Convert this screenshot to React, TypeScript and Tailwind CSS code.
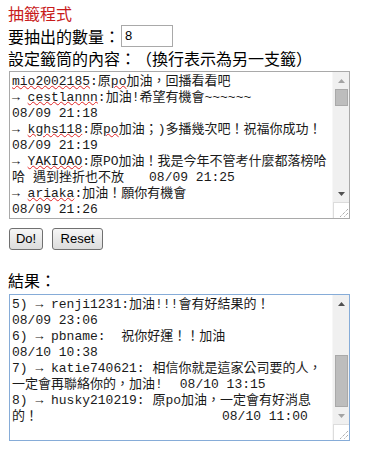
import React from "react";

const sans = "font-['Noto_Sans_CJK_TC','Noto_Sans',sans-serif]";

const U = ({ children }: { children: React.ReactNode }) => (
    <span className="underline decoration-wavy decoration-[#e02424] decoration-1 underline-offset-0">{children}</span>
);

const Arrow = ({ dark, down }: { dark: boolean; down?: boolean }) => (
    <div className="h-[17px] flex items-center justify-center">
        <svg width="7" height="4" viewBox="0 0 7 4">
            <path d={down ? "M0 0 L7 0 L3.5 4 Z" : "M0 4 L7 4 L3.5 0 Z"} fill={dark ? "#505050" : "#a3a3a3"} />
        </svg>
    </div>
);

type BoxProps = {
    lines: React.ReactNode[];
    height: string;
    border: string;
    thumbClass: string;
    atTop: boolean;
};

// fake textarea, drawn by hand so the scrollbar looks like the old windows one
const FakeTextarea = ({ lines, height, border, thumbClass, atTop }: BoxProps) => (
    <div className={`ml-px w-[341px] ${height} border ${border} bg-white flex overflow-hidden`}>
        <div className="flex-1 overflow-hidden pt-[2px] pl-[2px] font-['Liberation_Mono','Noto_Sans_CJK_TC',monospace] text-[13px] text-[#1a1a1a]">
            {lines.map((l, i) => (
                <div key={i} className="h-[16px] leading-[16px] whitespace-pre">{l}</div>
            ))}
        </div>
        <div className="w-[17px] flex flex-col bg-[#f0f0f0] border-l border-[#f7f7f7]">
            <Arrow dark={!atTop} />
            <div className="flex-1 flex flex-col items-center">
                <div className={`w-[13px] bg-[#bdbdbd] border border-[#a9a9a9] ${thumbClass}`} />
            </div>
            <Arrow dark={atTop} down />
            <div className="h-[16px] bg-white border-t border-l border-[#dcdcdc] flex items-end justify-end">
                <svg width="12" height="12" viewBox="0 0 12 12">
                    <path d="M11 3 L3 11 M11 7 L7 11" stroke="#8a8a8a" strokeWidth="1" strokeDasharray="1 1" />
                </svg>
            </div>
        </div>
    </div>
);

const sourceLines: React.ReactNode[] = [
    <><U>mio2002185</U>:原<U>po</U>加油，回播看看吧</>,
    <>→ <U>cestlannn</U>:加油!希望有機會~~~~~~</>,
    "08/09 21:18",
    <>→ <U>kghs118</U>:原<U>po</U>加油；)多播幾次吧！祝福你成功！</>,
    "08/09 21:19",
    <>→ <U>YAKIOAO</U>:原PO加油！我是今年不管考什麼都落榜哈</>,
    <>哈<span className="inline-block w-[8px]" />遇到挫折也不放<span className="inline-block w-[25px]" />08/09 21:25</>,
    <>→ <U>ariaka</U>:加油！願你有機會</>,
    "08/09 21:26",
];

const resultLines: React.ReactNode[] = [
    "5) → renji1231:加油!!!會有好結果的！",
    "08/09 23:06",
    "6) → pbname:  祝你好運！！加油",
    "08/10 10:38",
    "7) → katie740621: 相信你就是這家公司要的人，",
    <>一定會再聯絡你的，加油!<span className="inline-block w-[17px]" />08/10 13:15</>,
    "8) → husky210219: 原po加油，一定會有好消息",
    <>的！<span className="inline-block w-[184px]" />08/10 11:00</>,
];

const Button = ({ label, width }: { label: string; width: string }) => (
    <button className={`${width} h-[22px] rounded-[3px] border border-[#707070] bg-linear-to-b from-[#f6f6f6] to-[#dcdcdc] font-['Liberation_Sans',Arial,sans-serif] text-[13px] leading-[20px] text-black`}>
        {label}
    </button>
);

export default function App() {
    return (
        <div className={`w-[374px] h-[453px] bg-white overflow-hidden pl-[8px] pt-[3px] ${sans} text-[16px] text-black [text-spacing-trim:space-all]`}>
            <div className="h-[20px] leading-[20px] text-[#c81a1a]">抽籤程式</div>
            <div className="mt-[2px] h-[22px] flex items-center">
                <span className="leading-[22px]">要抽出的數量：</span>
                <div className="ml-px w-[52px] h-[22px] border border-[#a9a9a9] bg-white pl-[3px] font-['Liberation_Sans',Arial,sans-serif] text-[13px] leading-[20px]">8</div>
            </div>
            <div className="mt-px h-[20px] leading-[20px]">設定籤筒的內容：（換行表示為另一支籤）</div>
            <div className="mt-[3px]">
                <FakeTextarea lines={sourceLines} height="h-[148px]" border="border-[#a9a9a9]" thumbClass="h-[17px]" atTop />
            </div>
            <div className="mt-[9px] ml-px flex gap-[9px]">
                <Button label="Do!" width="w-[34px]" />
                <Button label="Reset" width="w-[51px]" />
            </div>
            <div className="mt-[20px] h-[20px] leading-[20px]">結果：</div>
            <div className="mt-[4px]">
                <FakeTextarea lines={resultLines} height="h-[147px]" border="border-[#86acd8]" thumbClass="mt-auto h-[52px]" atTop={false} />
            </div>
        </div>
    );
}
